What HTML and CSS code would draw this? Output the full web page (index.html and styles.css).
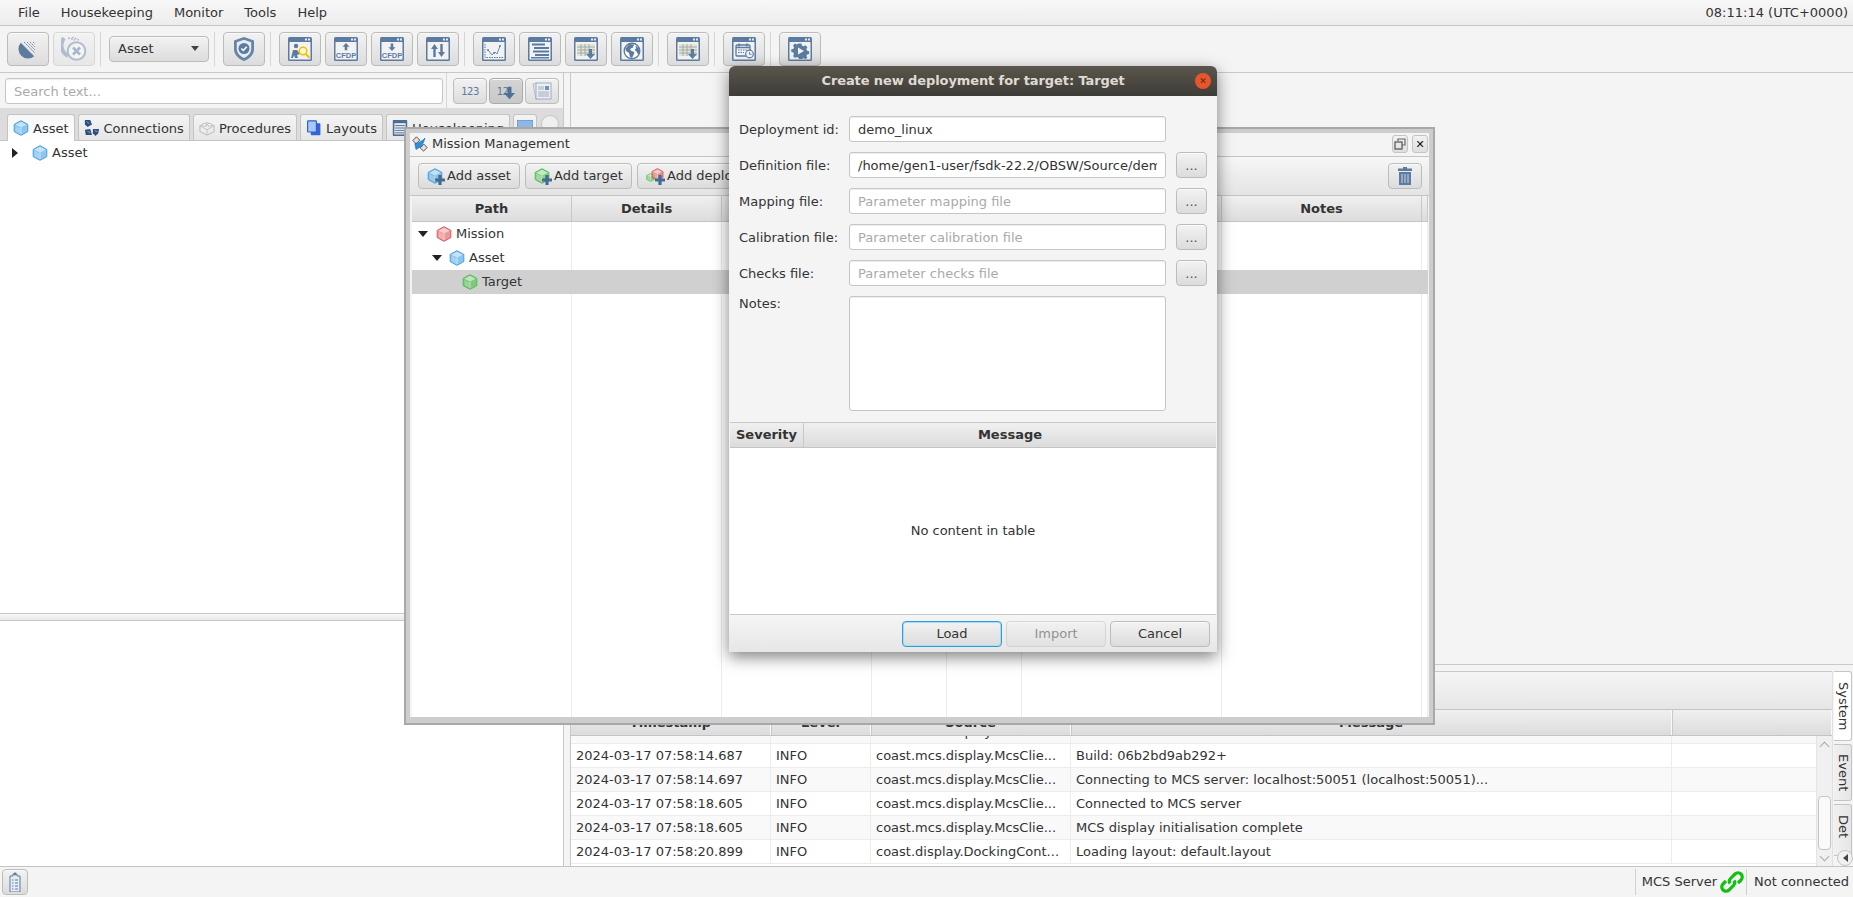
FILE: index.html
```html
<!DOCTYPE html>
<html lang="en">
<head>
<meta charset="utf-8">
<title>Mission Management</title>
<link rel="stylesheet" href="styles.css">
</head>
<body>
<svg class="defs" xmlns="http://www.w3.org/2000/svg">
  <symbol id="winbase" viewBox="0 0 24 24">
    <rect width="24" height="24" rx="1.5" fill="#5b7ba0"/>
    <rect x="1.5" y="5" width="21" height="17.5" fill="#f2f2f2"/>
    <rect x="17" y="1.5" width="2" height="2" fill="#e8eef4"/><rect x="20" y="1.5" width="2" height="2" fill="#e8eef4"/>
  </symbol>
  <symbol id="cube" viewBox="0 0 16 16">
    <path d="M8 .7l6.800 3.700v7.200L8 15.300l-6.800-3.700V4.400z" fill="currentColor" fill-opacity=".6" stroke="currentColor" stroke-linejoin="round"/>
    <path d="M8 1.800l5.600 2.900L8 7.600 2.400 4.700z" fill="#fff" fill-opacity=".5"/>
    <path d="M8 7.600V14.200" stroke="#fff" stroke-opacity=".55"/>
    <path d="M2.600 6l4.700 2.400v5.400l-4.700-2.600z" fill="#fff" fill-opacity=".22"/>
  </symbol>
  <symbol id="plus" viewBox="0 0 10 10"><path d="M3.400 0h3.200v3.400H10v3.200H6.600V10H3.400V6.600H0V3.400h3.400z" fill="#456a94"/></symbol>
  <symbol id="dish" viewBox="0 0 20 20">
    <path d="M2.800 3.800A9.500 9.500 0 0 0 16.200 17.200z" fill="#5b7ba0"/>
    <path d="M6 3l11 11M9 3l8 8M12 3l5 5M15 3l2 2" stroke="#6f8cae" stroke-width="1" stroke-dasharray="2 1" fill="none"/>
  </symbol>
  <symbol id="dishx" viewBox="0 0 26 24">
    <path d="M3 1A12 12 0 0 0 7 19" fill="none" stroke="#6d88a8" stroke-width="4"/>
    <path d="M7 1l7 2M11 0l7 3" stroke="#6d88a8" stroke-width="1.500" stroke-dasharray="2 1"/>
    <circle cx="15.500" cy="14" r="8.800" fill="#f4f4f4" stroke="#6d88a8" stroke-width="2"/>
    <path d="M12 10.500l7 7M19 10.500l-7 7" stroke="#5b7ba0" stroke-width="2.600"/>
  </symbol>
  <symbol id="shield" viewBox="0 0 22 26">
    <path d="M11 1l10 3.500V13c0 6-5 10-10 12C6 23 1 19 1 13V4.500z" fill="#6584a8"/>
    <path d="M11 3.800l7.200 2.500V13c0 4.200-3.600 7.200-7.200 9-3.600-1.800-7.200-4.800-7.200-9V6.300z" fill="#e6ebf1"/>
    <circle cx="11" cy="12.500" r="5.500" fill="#5b7ba0"/>
    <path d="M8.300 12.500l2 2 3.500-3.700" stroke="#fff" stroke-width="1.500" fill="none"/>
  </symbol>
  <symbol id="w-search" viewBox="0 0 24 24">
    <use href="#winbase" width="24" height="24"/>
    <circle cx="8" cy="9" r="2.200" fill="#5b7ba0"/>
    <path d="M3 21l2-8 4 0 3 4-3 1 1 3h-3l-1-3-1 3z" fill="#5b7ba0"/>
    <circle cx="15" cy="14" r="3.800" fill="#fdf7d0" stroke="#f2c200" stroke-width="1.500"/>
    <path d="M17.800 17l3.600 3.800" stroke="#f2c200" stroke-width="2"/>
  </symbol>
  <symbol id="w-up" viewBox="0 0 24 24">
    <use href="#winbase" width="24" height="24"/>
    <path d="M12 6l3.500 3.800h-2.200v3.500h-2.600V9.800H8.500z" fill="#5b7ba0"/>
    <text x="12" y="20.800" class="cfdp">CFDP</text>
  </symbol>
  <symbol id="w-down" viewBox="0 0 24 24">
    <use href="#winbase" width="24" height="24"/>
    <path d="M12 14l3.500-3.800h-2.200V6.500h-2.600v3.700H8.500z" fill="#5b7ba0"/>
    <text x="12" y="20.800" class="cfdp">CFDP</text>
  </symbol>
  <symbol id="w-updown" viewBox="0 0 24 24">
    <use href="#winbase" width="24" height="24"/>
    <path d="M8.500 7l3.500 5H9.700v8H7.300v-8H5zM15.500 20L12 15h2.300V7h2.400v8H19z" fill="#5b7ba0"/>
  </symbol>
  <symbol id="w-chart" viewBox="0 0 24 24">
    <use href="#winbase" width="24" height="24"/>
    <path d="M3 7v13.500h18" stroke="#5b7ba0" fill="none" stroke-dasharray="1.500 1"/>
    <path d="M6 13l4 5 3-3 2 2 3-8" stroke="#6f8dae" fill="none"/>
    <circle cx="6" cy="13" r="1" fill="#5b7ba0"/><circle cx="12" cy="16" r="1" fill="#5b7ba0"/><circle cx="18" cy="9" r="1" fill="#5b7ba0"/>
  </symbol>
  <symbol id="w-list" viewBox="0 0 24 24">
    <use href="#winbase" width="24" height="24"/>
    <path d="M4 6.500h13v2H4zM6 10h15v2H6zM5 13.500h16v2H5zM7 17h14v2H7z" fill="#5b7ba0"/>
    <path d="M3 20h18v1.500H3z" fill="#5b7ba0"/>
  </symbol>
  <symbol id="w-table" viewBox="0 0 24 24">
    <use href="#winbase" width="24" height="24"/>
    <path d="M3 7h18v12H3z" fill="#e9e6c8"/>
    <path d="M3 10h18M3 13h18M3 16h18M7 7v12M11 7v12M15 7v12" stroke="#8aa0ba" stroke-width=".8"/>
    <path d="M15 12h3v5h3l-4.500 5-4.500-5h3z" fill="#5b7ba0"/>
  </symbol>
  <symbol id="w-globe" viewBox="0 0 24 24">
    <use href="#winbase" width="24" height="24"/>
    <circle cx="12" cy="14" r="7.800" fill="#fff" stroke="#5b7ba0" stroke-width="1.400"/>
    <path d="M5.500 11.500l4-4.500 4.500.5-1 3-3 1.500 1.500 2 3 1-1 3-1.500 3-2-1-1-4-3-2zM15.500 8.500l4 3.500.5 3-2 2.500-1.500-3-2-1.500 1.500-1.500z" fill="#5b7ba0"/>
  </symbol>
  <symbol id="w-cal" viewBox="0 0 24 24">
    <use href="#winbase" width="24" height="24"/>
    <rect x="4" y="8" width="14" height="11" rx="1" fill="none" stroke="#5b7ba0" stroke-width="1.300"/>
    <path d="M4 10.500h14" stroke="#5b7ba0" stroke-width="1.500"/>
    <path d="M7 6.500v3M15 6.500v3" stroke="#5b7ba0" stroke-width="1.500"/>
    <path d="M6 13h9M6 15.500h6" stroke="#5b7ba0" stroke-dasharray="1.500 1"/>
    <circle cx="17.500" cy="17" r="3.800" fill="#f2f2f2" stroke="#5b7ba0" stroke-width="1.200"/>
    <path d="M17.500 15v2.300h2" stroke="#5b7ba0" fill="none" stroke-width=".9"/>
  </symbol>
  <symbol id="w-gear" viewBox="0 0 24 24">
    <use href="#winbase" width="24" height="24"/>
    <path d="M10.500 6.500h3l.4 2 1.700.8 1.800-1 2 2-1 1.800.7 1.700 2 .4v2.800l-2 .4-.7 1.700 1 1.800-2 1-1.800-.6-1.700.7h-3l-.4-1.300-1.700-.7-1.800 1-2-2 1-1.800-.7-1.700-2-.4v-2.800l2-.4.700-1.700-1-1.800 2-2 1.800 1 1.700-.8z" fill="#5b7ba0"/>
    <path d="M10 10.500l6 3.500-6 3.500z" fill="#f2f2f2"/>
  </symbol>
  <symbol id="arrowdown" viewBox="0 0 14 16"><path d="M4.500 0h5v8H14l-7 8-7-8h4.500z" fill="#4f6f96"/></symbol>
  <symbol id="docs" viewBox="0 0 20 20">
    <path d="M1 3l4-1 2 16-3 0z" fill="#dbe2ea" stroke="#8ca2bb" stroke-width=".7"/>
    <rect x="4" y="2" width="15" height="16" fill="#eef1f4" stroke="#8ca2bb"/>
    <rect x="13" y="5" width="4" height="4" fill="#5b7ba0"/>
    <path d="M6 6h6M6 8h6M6 11h11M6 13h11M6 15h11" stroke="#8ca2bb"/>
  </symbol>
  <symbol id="conn" viewBox="0 0 16 18">
    <path d="M0 0h6l2 5-5 3-3-3z" fill="#2f4f7e"/>
    <path d="M0 11l6-1 2 7H1z" fill="#2f4f7e"/>
    <path d="M9 10h7l-1 5-3 3-3-3z" fill="#2f4f7e"/>
    <path d="M2 2l3 2M3 13l3 1M11 12l3 1" stroke="#8fb0d8"/>
  </symbol>
  <symbol id="brick" viewBox="0 0 18 18">
    <path d="M9 3l8 3.500v6.500L9 17l-8-4V6.500z" fill="#ececec" stroke="#b5b5b5"/>
    <ellipse cx="6" cy="5.500" rx="2.500" ry="1.500" fill="#fafafa" stroke="#b5b5b5"/>
    <ellipse cx="12" cy="5.500" rx="2.500" ry="1.500" fill="#fafafa" stroke="#b5b5b5"/>
    <path d="M1 6.500L9 11l8-4.500M9 11v6" stroke="#c2c2c2" fill="none"/>
  </symbol>
  <symbol id="layouts" viewBox="0 0 18 20">
    <rect x="5" y="4" width="12" height="15" fill="#3563d8" rx="1"/>
    <rect x="1" y="1" width="11" height="14" fill="#a9c8f5" stroke="#2f5fd6" stroke-width="1.500" rx="1"/>
  </symbol>
  <symbol id="house" viewBox="0 0 18 20">
    <rect width="18" height="20" rx="1" fill="#4e6d92"/>
    <rect x="2" y="4" width="14" height="14" fill="#e9eef3"/>
    <path d="M3 7h12M3 10h12M3 13h12M3 16h12" stroke="#4e6d92" stroke-width="1.200"/>
  </symbol>
  <symbol id="smalltab" viewBox="0 0 16 16"><rect width="16" height="16" fill="#8fb7e6" stroke="#5f8cc4"/></symbol>
  <symbol id="sat" viewBox="0 0 16 16">
    <path d="M.8 4.500L4.500.8l3.300 3.300-3.700 3.700z" fill="#e2e2e2" stroke="#444" stroke-width=".9"/>
    <path d="M8.200 11.900l3.700-3.700 3.300 3.300-3.700 3.700z" fill="#e2e2e2" stroke="#444" stroke-width=".9"/>
    <path d="M2.800 7.500l3-.3L11 4l2-2-1.500 4.500L9 10.500l-5 3z" fill="#2b8fdc" stroke="#1e5f95" stroke-width=".6"/>
  </symbol>
  <symbol id="trash" viewBox="0 0 14 18">
    <path d="M5 0h4v1.500h5V4H0V1.500h5z" fill="#5b7ba0"/>
    <path d="M1 5h12v13H1z" fill="#5b7ba0"/>
    <path d="M4 7v9M7 7v9M10 7v9" stroke="#cfd9e4" stroke-width="1"/>
  </symbol>
  <symbol id="restore" viewBox="0 0 12 12">
    <path d="M4 3V1h7v6H8" fill="none" stroke="#666" stroke-width="1.200"/>
    <rect x="1" y="4" width="7" height="7" fill="none" stroke="#666" stroke-width="1.400"/>
  </symbol>
  <symbol id="clip" viewBox="0 0 12 20">
    <path d="M4 2h4v2h3v16H1V4h3z" fill="#e7ecf2" stroke="#5b7ba0"/>
    <circle cx="6" cy="2" r="1.400" fill="#5b7ba0"/>
    <path d="M3 8h1.500M3 11h1.500M3 14h1.500M3 17h1.500M6 8h3M6 11h3M6 14h3M6 17h3" stroke="#5b7ba0"/>
  </symbol>
  <symbol id="link" viewBox="0 0 24 24">
    <g fill="none" stroke="#12c012" stroke-width="3.200">
      <path d="M10 13.500a4 4 0 0 1 .5-5l4.500-4.500a4.200 4.200 0 0 1 6 6l-3 3"/>
      <path d="M14 10.500a4 4 0 0 1-.5 5l-4.500 4.500a4.200 4.200 0 0 1-6-6l3-3"/>
    </g>
  </symbol>
</svg>

<div class="app">
  <nav class="menubar">
    <div class="menus">
      <span>File</span><span>Housekeeping</span><span>Monitor</span><span>Tools</span><span>Help</span>
    </div>
    <span class="clock">08:11:14 (UTC+0000)</span>
  </nav>

  <div class="toolbar">
    <button class="btn tool"><svg class="i20"><use href="#dish"/></svg></button>
    <button class="btn tool faded"><svg class="i26"><use href="#dishx"/></svg></button>
    <i class="sep"></i>
    <div class="btn combo"><span>Asset</span><i class="caret"></i></div>
    <i class="sep"></i>
    <button class="btn tool"><svg class="i-shield"><use href="#shield"/></svg></button>
    <i class="sep"></i>
    <button class="btn tool"><svg class="i24"><use href="#w-search"/></svg></button>
    <button class="btn tool"><svg class="i24"><use href="#w-up"/></svg></button>
    <button class="btn tool"><svg class="i24"><use href="#w-down"/></svg></button>
    <button class="btn tool"><svg class="i24"><use href="#w-updown"/></svg></button>
    <i class="sep"></i>
    <button class="btn tool"><svg class="i24"><use href="#w-chart"/></svg></button>
    <button class="btn tool"><svg class="i24"><use href="#w-list"/></svg></button>
    <button class="btn tool"><svg class="i24"><use href="#w-table"/></svg></button>
    <button class="btn tool"><svg class="i24"><use href="#w-globe"/></svg></button>
    <i class="sep"></i>
    <button class="btn tool"><svg class="i24"><use href="#w-table"/></svg></button>
    <i class="sep"></i>
    <button class="btn tool"><svg class="i24"><use href="#w-cal"/></svg></button>
    <i class="sep"></i>
    <button class="btn tool"><svg class="i24"><use href="#w-gear"/></svg></button>
  </div>

  <main class="main">
    <section class="leftpane">
      <div class="searchrow">
        <div class="searchcell"><div class="field search placeholder">Search text...</div></div>
        <div class="searchbtns">
          <button class="btn sbtn"><span class="num">123</span></button>
          <button class="btn sbtn pressed"><span class="num">12</span><svg class="i-arrow"><use href="#arrowdown"/></svg></button>
          <button class="btn sbtn faded-soft"><svg class="i20"><use href="#docs"/></svg></button>
        </div>
      </div>
      <div class="tabs">
        <div class="tab active"><svg class="i16 c-blue"><use href="#cube"/></svg><span>Asset</span></div>
        <div class="tab"><svg class="i16"><use href="#conn"/></svg><span>Connections</span></div>
        <div class="tab"><svg class="i16"><use href="#brick"/></svg><span>Procedures</span></div>
        <div class="tab"><svg class="i16"><use href="#layouts"/></svg><span>Layouts</span></div>
        <div class="tab"><svg class="i16"><use href="#house"/></svg><span>Housekeeping</span></div>
        <div class="tab small"><svg class="i16"><use href="#smalltab"/></svg></div>
        <div class="tabmore"></div>
      </div>
      <div class="tree">
        <div class="treerow"><i class="tri tri-r"></i><svg class="i16 c-blue"><use href="#cube"/></svg><span>Asset</span></div>
      </div>
      <div class="hsplit"></div>
      <div class="lower"></div>
    </section>
    <div class="vsplit"></div>
    <section class="rightpane">
      <div class="workspace"></div>
      <div class="logpanel">
        <div class="logmain">
          <div class="logbar"></div>
          <div class="loghead lgrid">
            <div>Timestamp</div><div>Level</div><div>Source</div><div>Message</div><div></div>
          </div>
          <div class="logbody">
            <div class="logrows">
              <div class="lrow lgrid first"><div>2024-03-17 07:58:14.686</div><div>INFO</div><div>coast.mcs.display.McsClie...</div><div>Version: 22.2</div><div></div></div>
              <div class="lrow lgrid"><div>2024-03-17 07:58:14.687</div><div>INFO</div><div>coast.mcs.display.McsClie...</div><div>Build: 06b2bd9ab292+</div><div></div></div>
              <div class="lrow lgrid"><div>2024-03-17 07:58:14.697</div><div>INFO</div><div>coast.mcs.display.McsClie...</div><div>Connecting to MCS server: localhost:50051 (localhost:50051)...</div><div></div></div>
              <div class="lrow lgrid"><div>2024-03-17 07:58:18.605</div><div>INFO</div><div>coast.mcs.display.McsClie...</div><div>Connected to MCS server</div><div></div></div>
              <div class="lrow lgrid"><div>2024-03-17 07:58:18.605</div><div>INFO</div><div>coast.mcs.display.McsClie...</div><div>MCS display initialisation complete</div><div></div></div>
              <div class="lrow lgrid"><div>2024-03-17 07:58:20.899</div><div>INFO</div><div>coast.display.DockingCont...</div><div>Loading layout: default.layout</div><div></div></div>
            </div>
            <div class="scrollbar">
              <i class="chev up"></i>
              <i class="thumb"></i>
              <i class="chev down"></i>
            </div>
          </div>
        </div>
        <div class="sidetabs">
          <div class="vtab on"><span>System</span></div>
          <div class="vtab ev"><span>Event</span></div>
          <div class="vtab det"><span>Det</span></div>
          <div class="roundbtn"><i class="tri tri-l"></i></div>
        </div>
      </div>
    </section>
  </main>

  <footer class="status">
    <button class="btn clipbtn"><svg class="i-clip"><use href="#clip"/></svg></button>
    <div class="statusright">
      <div class="scell first">MCS Server<svg class="i24"><use href="#link"/></svg></div>
      <div class="scell">Not connected</div>
    </div>
  </footer>

  <div class="mission">
    <div class="mwin">
      <div class="mtitle">
        <svg class="i16"><use href="#sat"/></svg><span class="mname">Mission Management</span>
        <button class="wbtn"><svg class="i12"><use href="#restore"/></svg></button>
        <button class="wbtn close">✕</button>
      </div>
      <div class="mbar">
        <button class="btn abtn add-a"><span class="stack"><svg class="i16 c-blue"><use href="#cube"/></svg><svg class="i-plus"><use href="#plus"/></svg></span><span>Add asset</span></button>
        <button class="btn abtn add-t"><span class="stack"><svg class="i16 c-green"><use href="#cube"/></svg><svg class="i-plus"><use href="#plus"/></svg></span><span>Add target</span></button>
        <button class="btn abtn add-d"><span class="stack wide"><svg class="i-back c-green"><use href="#cube"/></svg><svg class="i-front c-red"><use href="#cube"/></svg><svg class="i-plus"><use href="#plus"/></svg></span><span>Add deployment</span></button>
        <button class="btn trash"><svg class="i-trash"><use href="#trash"/></svg></button>
      </div>
      <div class="mtable">
        <div class="mhead mgrid"><div>Path</div><div>Details</div><div></div><div></div><div></div><div></div><div>Notes</div><div></div></div>
        <div class="mrow mgrid"><div class="pcell lv0"><i class="tri tri-d"></i><svg class="i16 c-red"><use href="#cube"/></svg><span>Mission</span></div><div></div><div></div><div></div><div></div><div></div><div></div><div></div></div>
        <div class="mrow mgrid"><div class="pcell lv1"><i class="tri tri-d"></i><svg class="i16 c-blue"><use href="#cube"/></svg><span>Asset</span></div><div></div><div></div><div></div><div></div><div></div><div></div><div></div></div>
        <div class="mrow mgrid sel"><div class="pcell lv2"><svg class="i16 c-green"><use href="#cube"/></svg><span>Target</span></div><div></div><div></div><div></div><div></div><div></div><div></div><div></div></div>
        <div class="mfill mgrid"><div></div><div></div><div></div><div></div><div></div><div></div><div></div><div></div></div>
      </div>
    </div>
  </div>

  <div class="dialog">
    <div class="dtitle"><span>Create new deployment for target: Target</span><button class="dclose">✕</button></div>
    <div class="form">
      <label>Deployment id:</label><div class="field">demo_linux</div><div></div>
      <label>Definition file:</label><div class="field"><span class="fclip">/home/gen1-user/fsdk-22.2/OBSW/Source/demo_linux/deployment.xml</span></div><button class="btn dots">...</button>
      <label>Mapping file:</label><div class="field placeholder">Parameter mapping file</div><button class="btn dots">...</button>
      <label>Calibration file:</label><div class="field placeholder">Parameter calibration file</div><button class="btn dots">...</button>
      <label>Checks file:</label><div class="field placeholder">Parameter checks file</div><button class="btn dots">...</button>
      <label class="top">Notes:</label><div class="field area"></div><div></div>
    </div>
    <div class="dtable">
      <div class="dhead"><div class="sev">Severity</div><div class="msg">Message</div></div>
      <div class="dempty">No content in table</div>
    </div>
    <div class="dbar">
      <button class="btn dbtn focus">Load</button>
      <button class="btn dbtn faded">Import</button>
      <button class="btn dbtn">Cancel</button>
    </div>
  </div>
</div>
</body>
</html>
```

FILE: styles.css
```css
* { box-sizing: border-box; }
html, body { margin: 0; height: 100%; }
body {
  font: 13px/16px "DejaVu Sans", sans-serif;
  color: #333;
  background: #f4f4f4;
  overflow: hidden;
}
.defs { display: none; }
.cfdp { font: bold 7.5px "Liberation Sans", sans-serif; fill: #5b7ba0; text-anchor: middle; }
svg { display: block; flex: none; overflow: visible; }
i { display: block; font-style: normal; }
.i12 { width: 12px; height: 12px; }
.i16 { width: 16px; height: 16px; }
.i20 { width: 20px; height: 20px; }
.i24 { width: 24px; height: 24px; }
.i26 { width: 26px; height: 24px; }
.i-shield { width: 22px; height: 26px; }
.i-arrow { width: 11px; height: 14px; margin: 3px 0 0 -4px; }
.i-plus { width: 10px; height: 10px; position: absolute; right: -2px; bottom: -1px; }
.i-back { width: 9px; height: 9px; position: absolute; left: 0; top: 5px; }
.i-front { width: 13px; height: 13px; position: absolute; left: 5px; top: 0; }
.i-trash { width: 14px; height: 18px; }
.i-clip { width: 12px; height: 20px; }
.c-blue { color: #43a0e2; }
.c-green { color: #4cbf4c; }
.c-red { color: #e0555a; }

.app {
  position: relative;
  width: 1853px;
  height: 897px;
  display: flex;
  flex-direction: column;
  overflow: hidden;
}

/* menu */
.menubar {
  height: 26px;
  flex: none;
  display: flex;
  justify-content: space-between;
  align-items: center;
  padding: 0 5px 0 18px;
  border-bottom: 1px solid #c4c4c4;
  background: linear-gradient(#f8f8f8, #ececec);
}
.menus { display: flex; gap: 21px; }

/* buttons */
.btn {
  font: inherit;
  color: inherit;
  padding: 0;
  display: flex;
  align-items: center;
  justify-content: center;
  border: 1px solid #bcbcbc;
  border-radius: 4px;
  background: linear-gradient(#f2f2f2, #dcdcdc);
  box-shadow: inset 0 1px 0 #fafafa;
}
.faded { opacity: .5; }
.faded-soft svg { opacity: .8; }
.toolbar {
  height: 47px;
  flex: none;
  display: flex;
  align-items: center;
  padding: 0 0 1px 7px;
  border-bottom: 1px solid #c8c8c8;
}
.tool { width: 42px; height: 34px; }
.tool + .tool { margin-left: 4px; }
.sep { width: 1px; height: 34px; background: #d6d6d6; margin: 0 8px 0 5px; }
.combo { width: 100px; height: 26px; justify-content: space-between; padding: 0 9px 0 8px; }
.caret { width: 0; height: 0; border: 4.5px solid transparent; border-top: 5px solid #444; border-bottom: 0; }

/* main layout */
.main { flex: 1; min-height: 0; display: flex; }
.leftpane { width: 563px; flex: none; display: flex; flex-direction: column; }
.vsplit { width: 8px; flex: none; border-left: 1px solid #c8c8c8; border-right: 1px solid #c8c8c8; }
.rightpane { flex: 1; min-width: 0; display: flex; flex-direction: column; }

.searchrow { height: 35px; flex: none; display: flex; }
.searchcell { width: 447px; padding: 5px 3px 0 5px; border-right: 1px solid #d8d8d8; }
.searchbtns { display: flex; gap: 2px; padding: 5px 0 0 6px; }
.field {
  height: 26px;
  padding: 1px 8px 0;
  line-height: 24px;
  background: #fff;
  border: 1px solid #c6c6c6;
  border-radius: 3px;
  box-shadow: inset 0 1px 1px #eee;
  white-space: nowrap;
  overflow: hidden;
}
.fclip { display: block; overflow: hidden; }
.placeholder { color: #aaa; }
.search { width: 438px; }
.sbtn { width: 34px; height: 26px; }
.pressed { background: linear-gradient(#d4d4d4, #c8c8c8); border-color: #aaa; }
.num { font: 10px "DejaVu Sans", sans-serif; color: #5b7ba0; letter-spacing: -.5px; }

.tabs {
  height: 33px;
  flex: none;
  display: flex;
  align-items: flex-end;
  gap: 3px;
  padding-left: 7px;
  background: #dcdcdc;
  border-bottom: 1px solid #c4c4c4;
}
.tab {
  height: 26px;
  display: flex;
  align-items: center;
  gap: 4px;
  padding: 0 5px;
  border: 1px solid #c4c4c4;
  border-bottom: 0;
  border-radius: 3px 3px 0 0;
  background: linear-gradient(#f4f4f4, #e6e6e6);
}
.tab span { padding-top: 2px; }
.tab.active { background: linear-gradient(#f7f7f7, #fff); margin-bottom: -1px; height: 27px; }
.tab.small { padding: 0 3px; width: 24px; }
.tabmore { width: 18px; height: 18px; margin: 0 0 7px 1px; border: 1px solid #c4c4c4; border-radius: 50%; background: #f0f0f0; }

.tree { flex: 1; background: #fff; }
.treerow { height: 24px; display: flex; align-items: center; gap: 4px; padding-left: 12px; }
.tri { width: 0; height: 0; border: solid transparent; }
.tri-r { border-width: 5px 0 5px 6px; border-left-color: #222; margin-right: 10px; }
.tri-l { border-width: 4px 5px 4px 0; border-right-color: #444; }
.tri-d { border-width: 6px 5px 0 5px; border-top-color: #222; }
.hsplit { height: 8px; flex: none; border-top: 1px solid #c8c8c8; border-bottom: 1px solid #c8c8c8; background: linear-gradient(#f8f8f8, #e8e8e8); }
.lower { height: 245px; flex: none; background: #fff; }

/* log */
.workspace { flex: 1; }
.logpanel { height: 202px; flex: none; display: flex; border-top: 1px solid #c8c8c8; padding-top: 6px; }
.logmain { flex: 1; min-width: 0; display: flex; flex-direction: column; border-top: 1px solid #c8c8c8; }
.logbar { height: 38px; flex: none; background: linear-gradient(#f5f5f5, #e6e6e6); border-bottom: 1px solid #c4c4c4; }
.lgrid { display: grid; grid-template-columns: 200px 100px 200px 601px 1fr; }
.loghead {
  height: 26px;
  flex: none;
  font-weight: bold;
  background: linear-gradient(#f0f0f0, #dcdcdc);
  border-bottom: 1px solid #c4c4c4;
}
.loghead > div { display: flex; align-items: center; justify-content: center; border-right: 1px solid #fafafa; box-shadow: 1px 0 0 #c8c8c8; }
.logbody { flex: 1; min-height: 0; display: flex; position: relative; overflow: hidden; background: #fff; }
.logrows { flex: 1; min-width: 0; }
.lrow { height: 24px; border-bottom: 1px solid #ececec; }
.lrow > div { padding: 0 5px; line-height: 23px; border-right: 1px solid #ececec; white-space: nowrap; overflow: hidden; }
.lrow:nth-child(odd) { background: #f9f9f9; }
.lrow.first { margin-top: -16px; }
.lrow > div:last-child { border-right: 0; }
.scrollbar {
  position: absolute;
  right: 0;
  top: 0;
  bottom: 0;
  width: 16px;
  background: #f0f0f0;
  border-left: 1px solid #e4e4e4;
}
.chev { position: absolute; left: 4px; width: 7px; height: 7px; border: solid #aaa; border-width: 1px 0 0 1px; }
.chev.up { top: 7px; transform: rotate(45deg); }
.chev.down { bottom: 6px; transform: rotate(225deg); }
.thumb { position: absolute; left: 1px; top: 60px; width: 13px; height: 54px; background: #fafafa; border: 1px solid #c4c4c4; border-radius: 4px; }

.sidetabs { width: 21px; flex: none; position: relative; display: flex; flex-direction: column; gap: 3px; border-left: 1px solid #e0e0e0; padding-left: 1px; overflow: hidden; }
.vtab {
  width: 18px;
  display: flex;
  align-items: center;
  justify-content: center;
  background: linear-gradient(90deg, #f0f0f0, #e6e6e6);
  border: 1px solid #c4c4c4;
  border-left: 0;
  border-radius: 0 3px 3px 0;
  overflow: hidden;
}
.vtab span { writing-mode: vertical-rl; white-space: nowrap; }
.vtab.on { height: 70px; background: #fff; }
.vtab.ev { height: 57px; }
.vtab.det { height: 52px; align-items: flex-start; justify-content: center; padding-top: 10px; }
.roundbtn {
  position: absolute;
  right: 0;
  bottom: 0;
  width: 16px;
  height: 16px;
  border: 1px solid #c4c4c4;
  border-radius: 50%;
  background: #f0f0f0;
  display: flex;
  align-items: center;
  justify-content: center;
}

/* status */
.status {
  height: 31px;
  flex: none;
  display: flex;
  justify-content: space-between;
  align-items: center;
  padding-left: 2px;
  border-top: 1px solid #c4c4c4;
}
.clipbtn { width: 26px; height: 26px; }
.statusright { display: flex; height: 26px; }
.scell { display: flex; align-items: center; gap: 3px; padding: 0 4px 0 7px; border-left: 1px solid #d0d0d0; }
.scell.first { padding: 0 2px 0 6px; }

/* mission window */
.mission {
  position: absolute;
  left: 404px;
  top: 127px;
  width: 1031px;
  height: 598px;
  padding: 4px 4px 6px;
  background: #cdcdcd;
  border: 2px solid #a8a8a8;
  display: flex;
}
.mwin { flex: 1; min-width: 0; display: flex; flex-direction: column; background: #f4f4f4; }
.mtitle {
  height: 24px;
  flex: none;
  display: flex;
  align-items: center;
  padding: 0 1px 1px 2px;
  border-bottom: 1px solid #c4c4c4;
  gap: 2px;
}
.mname { flex: 1; margin: 0 0 1px 2px; }
.wbtn {
  width: 16px;
  height: 18px;
  padding: 0;
  display: flex;
  align-items: center;
  justify-content: center;
  margin-left: 2px;
  border: 1px solid #c4c4c4;
  border-radius: 3px;
  background: linear-gradient(#f2f2f2, #dedede);
  font: 11px/1 "DejaVu Sans", sans-serif;
  color: #111;
}
.mbar {
  height: 39px;
  flex: none;
  display: flex;
  align-items: center;
  gap: 5px;
  padding: 0 7px 0 8px;
  background: linear-gradient(#f6f6f6, #e4e4e4);
  border-bottom: 1px solid #c4c4c4;
}
.abtn { height: 26px; gap: 4px; justify-content: flex-start; padding: 0 0 0 8px; white-space: nowrap; flex: none; }
.stack { position: relative; display: block; width: 16px; height: 16px; }
.stack.wide { width: 17px; }
.add-a { width: 102px; }
.add-t { width: 107px; }
.add-d { width: 150px; }
.trash { width: 34px; height: 26px; margin-left: auto; }

.mtable { flex: 1; margin: 0 1px 0 2px; min-height: 0; display: flex; flex-direction: column; background: #fff; }
.mgrid { display: grid; grid-template-columns: 160px 150px 150px 75px 75px 200px 200px 1fr; }
.mhead { height: 26px; flex: none; font-weight: bold; background: linear-gradient(#f0f0f0, #dcdcdc); border-bottom: 1px solid #c4c4c4; }
.mhead > div { display: flex; align-items: center; justify-content: center; border-right: 1px solid #c8c8c8; }
.mrow { height: 24px; flex: none; }
.mrow > div, .mfill > div { border-right: 1px solid #ececec; }
.mfill { flex: 1; }
.sel { background: #d0d0d0; }
.sel > div { border-right-color: #d0d0d0; }
.pcell { display: flex; align-items: center; gap: 4px; }
.lv0 { padding-left: 6px; }
.lv1 { padding-left: 20px; }
.lv2 { padding-left: 50px; }
.lv0 .tri { margin-right: 4px; }
.lv1 .tri { margin-right: 3px; }

/* dialog */
.dialog {
  position: absolute;
  left: 729px;
  top: 66px;
  width: 488px;
  height: 586px;
  display: flex;
  flex-direction: column;
  background: #f4f4f4;
  border-radius: 6px 6px 0 0;
  box-shadow: 0 5px 16px rgba(0, 0, 0, .5);
}
.dtitle {
  height: 30px;
  flex: none;
  position: relative;
  display: flex;
  align-items: center;
  justify-content: center;
  border-radius: 6px 6px 0 0;
  background: linear-gradient(#5a564d, #3e3c37);
  color: #dfdbd2;
  font-weight: bold;
  letter-spacing: -.1px;
}
.dclose {
  position: absolute;
  right: 6px;
  top: 7px;
  width: 16px;
  height: 16px;
  padding: 0;
  border: 0;
  border-radius: 50%;
  background: #e8552a;
  color: #5b2a18;
  font: 9px/16px "DejaVu Sans", sans-serif;
}
.form {
  flex: none;
  display: grid;
  grid-template-columns: 100px 317px 31px;
  grid-template-rows: repeat(5, 26px) 115px;
  gap: 10px;
  padding: 20px 0 11px 10px;
}
.form label { align-self: center; white-space: nowrap; padding-top: 2px; }
.form label.top { align-self: start; padding-top: 0; }
.form .area { height: 115px; }
.dots { height: 26px; color: #555; padding-top: 2px; }
.dtable { flex: 1; min-height: 0; margin: 0 1px; display: flex; flex-direction: column; background: #fff; border-bottom: 1px solid #c8c8c8; }
.dhead { height: 26px; flex: none; display: flex; font-weight: bold; background: linear-gradient(#f0f0f0, #dcdcdc); border-top: 1px solid #c8c8c8; border-bottom: 1px solid #c4c4c4; }
.dhead > div { display: flex; align-items: center; justify-content: center; }
.sev { width: 74px; border-right: 1px solid #c8c8c8; }
.msg { flex: 1; }
.dempty { flex: 1; display: flex; align-items: center; justify-content: center; }
.dbar { height: 37px; flex: none; display: flex; justify-content: flex-end; align-items: center; gap: 4px; padding-right: 7px; background: linear-gradient(#f5f5f5, #e6e6e6); }
.dbtn { width: 100px; height: 26px; }
.focus { border-color: #2a9fd6; box-shadow: inset 0 0 0 1px #a9dcf2; }
```
